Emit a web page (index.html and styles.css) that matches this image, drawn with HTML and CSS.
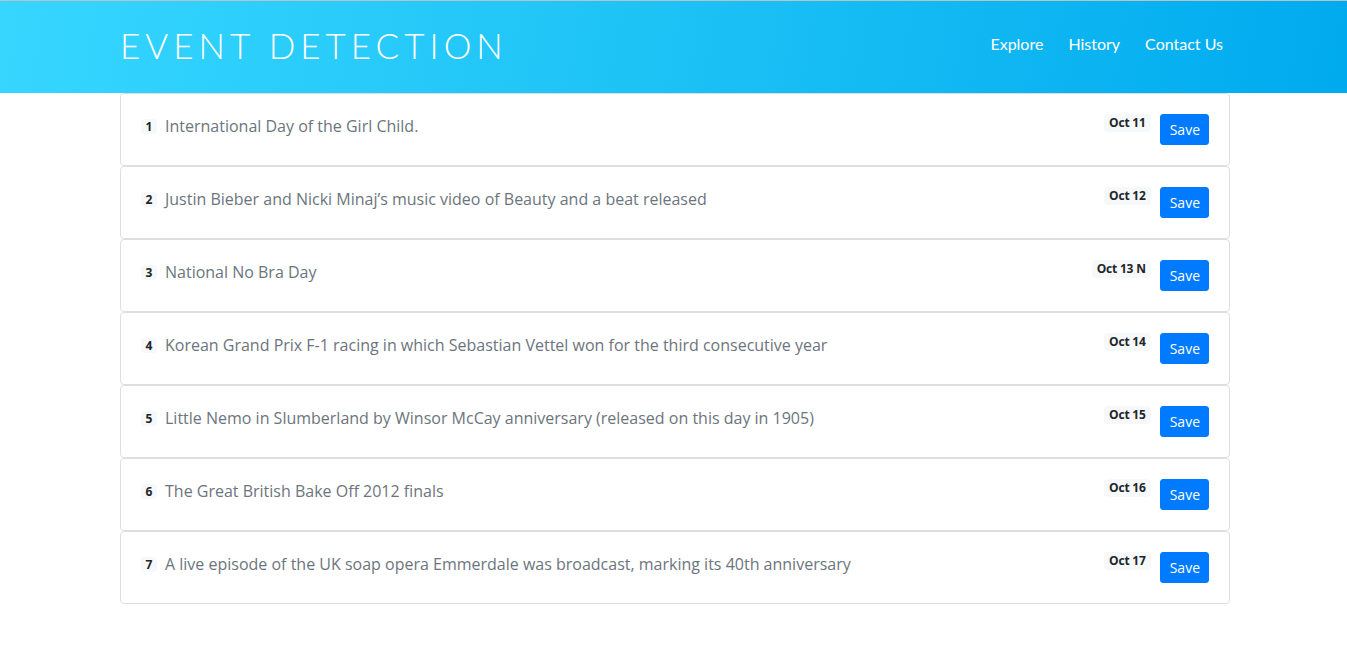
FILE: index.html
```html
<!DOCTYPE html>
<html>
<head>
<meta charset="utf-8">
<link rel="stylesheet" href="styles.css">
</head>
<body>
<header class="topbar">
  <div class="topbar-inner">
    <div class="brand">EVENT DETECTION</div>
    <nav class="nav">
      <a href="#">Explore</a>
      <a href="#">History</a>
      <a href="#">Contact Us</a>
    </nav>
  </div>
</header>
<main class="list">
  <div class="card">
    <div class="title"><span class="num">1</span>International Day of the Girl Child.</div>
    <div class="actions"><span class="date">Oct 11</span><button class="save">Save</button></div>
  </div>
  <div class="card">
    <div class="title"><span class="num">2</span>Justin Bieber and Nicki Minaj’s music video of Beauty and a beat released</div>
    <div class="actions"><span class="date">Oct 12</span><button class="save">Save</button></div>
  </div>
  <div class="card">
    <div class="title"><span class="num">3</span>National No Bra Day</div>
    <div class="actions"><span class="date">Oct 13 N</span><button class="save">Save</button></div>
  </div>
  <div class="card">
    <div class="title"><span class="num">4</span>Korean Grand Prix F-1 racing in which Sebastian Vettel won for the third consecutive year</div>
    <div class="actions"><span class="date">Oct 14</span><button class="save">Save</button></div>
  </div>
  <div class="card">
    <div class="title"><span class="num">5</span>Little Nemo in Slumberland by Winsor McCay anniversary (released on this day in 1905)</div>
    <div class="actions"><span class="date">Oct 15</span><button class="save">Save</button></div>
  </div>
  <div class="card">
    <div class="title"><span class="num">6</span>The Great British Bake Off 2012 finals</div>
    <div class="actions"><span class="date">Oct 16</span><button class="save">Save</button></div>
  </div>
  <div class="card">
    <div class="title"><span class="num">7</span>A live episode of the UK soap opera Emmerdale was broadcast, marking its 40th anniversary</div>
    <div class="actions"><span class="date">Oct 17</span><button class="save">Save</button></div>
  </div>
</main>
</body>
</html>
```
FILE: styles.css
```css
* { box-sizing: border-box; }
html, body { margin: 0; padding: 0; }
body {
  font-family: "Open Sans", "Liberation Sans", sans-serif;
  background: #fff;
}
.topbar {
  border-top: 1px solid #b9c3c7;
  height: 93px;
  background: linear-gradient(100deg, #36d6ff 0%, #1fc4f6 45%, #00aaee 100%);
}
.topbar-inner {
  width: 1110px;
  margin-left: 120px;
  height: 92px;
  display: flex;
  align-items: center;
  justify-content: space-between;
  padding-right: 7px;
}
.brand {
  font-family: "Lato", sans-serif;
  font-weight: 300;
  font-size: 35px;
  letter-spacing: 5px;
  color: #fff;
  margin-top: -5px;
}
.nav { display: flex; gap: 25px; margin-top: -8px; }
.nav a {
  color: #fff;
  text-decoration: none;
  font-family: "Lato", sans-serif;
  font-size: 16px;
}
.list {
  width: 1110px;
  margin-left: 120px;
}
.card {
  display: flex;
  justify-content: space-between;
  align-items: flex-start;
  border: 1px solid #dedede;
  border-radius: 4px;
  padding: 20px;
  height: 73px;
}
.title {
  font-size: 16px;
  line-height: 24px;
  color: #6c757d;
}
.num {
  display: inline-block;
  min-width: 16px;
  text-align: center;
  font-size: 12px;
  font-weight: 700;
  color: #212529;
  background: #f6f8fa;
  border-radius: 4px;
  padding: 0 4px;
  line-height: 15px;
  margin-right: 8px;
  vertical-align: 1px;
}
.actions { display: flex; align-items: flex-start; }
.date {
  font-size: 12px;
  font-weight: 700;
  letter-spacing: -0.2px;
  color: #212529;
  background: #f6f8fa;
  border-radius: 4px;
  padding: 0 5px;
  line-height: 18px;
  margin-right: 9px;
}
.save {
  font-family: "Open Sans", sans-serif;
  font-size: 14px;
  line-height: 21px;
  padding: 4px 8px 4px 9px;
  background: #007bff;
  color: #fff;
  border: 1px solid #007bff;
  border-radius: 3px;
}
```
